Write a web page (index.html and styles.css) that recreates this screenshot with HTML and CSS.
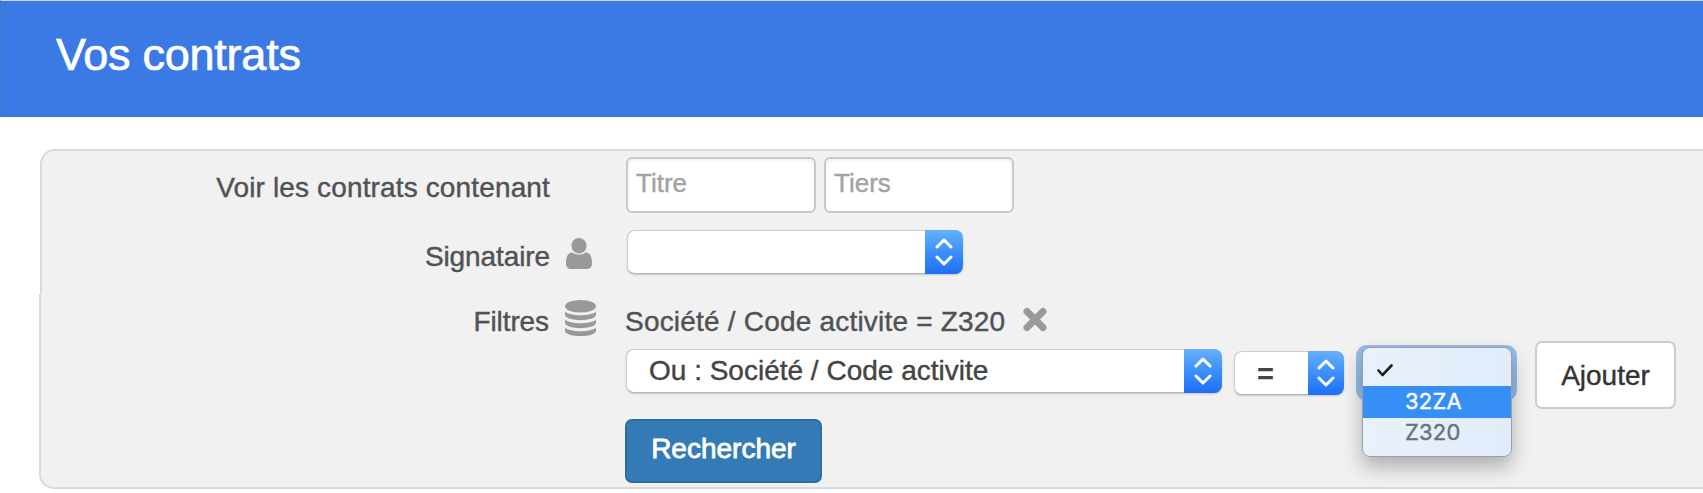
FILE: index.html
```html
<!DOCTYPE html>
<html lang="fr">
<head>
<meta charset="utf-8">
<title>Vos contrats</title>
<link rel="stylesheet" href="styles.css">
</head>
<body>
<header class="header"><h1 class="title">Vos contrats</h1></header>
<main class="main">
  <section class="panel panel-top">
    <div class="row row-search">
      <label class="label l-search">Voir les contrats contenant</label>
      <span class="icon"></span>
      <div class="inputs">
        <input class="input" type="text" placeholder="Titre">
        <input class="input" type="text" placeholder="Tiers">
      </div>
    </div>
    <div class="row row-sign">
      <label class="label l-sign">Signataire</label>
      <span class="icon icon-user"><svg width="26" height="31" viewBox="0 0 26 31" fill="#999"><ellipse cx="13" cy="7.7" rx="7.6" ry="7.7"/><path d="M6 14.2C9 17.3 17 17.3 20 14.2C24.500 14.800 26 19.500 26 25.500C26 29 24 31 21 31H5C2 31 0 29 0 25.500C0 19.500 1.500 14.800 6 14.200Z"/></svg></span>
      <div class="select s-sign"><span class="select-text"></span><span class="stepper"><svg width="18" height="28" viewBox="0 0 18 28"><path d="M2 9L9 2L16 9M2 19L9 26L16 19"/></svg></span></div>
    </div>
  </section>
  <section class="panel panel-bottom">
    <div class="row row-filter">
      <label class="label l-filter">Filtres</label>
      <span class="icon icon-db"><svg width="31" height="36" viewBox="0 0 31 36" fill="#999"><ellipse cx="15.5" cy="6.300" rx="15.500" ry="6.300"/><path id="band" d="M0 11.500C5 16.500 26 16.500 31 11.500V14.500C31 22 0 22 0 14.500Z"/><use href="#band" y="8"/><use href="#band" y="16"/></svg></span>
      <span class="filter-value">Société / Code activite = Z320</span>
      <svg class="remove" width="26" height="25" viewBox="0 0 26 25"><path d="M5 4.500L21 20.500M21 4.500L5 20.500"/></svg>
    </div>
    <div class="controls">
      <div class="select s-field"><span class="select-text t-field">Ou : Société / Code activite</span><span class="stepper"><svg width="18" height="28" viewBox="0 0 18 28"><path d="M2 9L9 2L16 9M2 19L9 26L16 19"/></svg></span></div>
      <div class="select s-op"><span class="select-text t-op">=</span><span class="stepper stepper-op"><svg width="18" height="28" viewBox="0 0 18 28"><path d="M2 9L9 2L16 9M2 19L9 26L16 19"/></svg></span></div>
      <div class="focus">
        <div class="menu">
          <div class="item item-empty"><svg width="16" height="13" viewBox="0 0 16 13"><path d="M1.500 6.500L5.500 11L14.500 1.500"/></svg></div>
          <div class="item item-active"><span>32ZA</span></div>
          <div class="item item-last">Z320</div>
        </div>
      </div>
      <button class="btn btn-add">Ajouter</button>
    </div>
    <button class="btn btn-search">Rechercher</button>
  </section>
</main>
</body>
</html>
```
FILE: styles.css
```css
* { box-sizing: border-box; }
body {
  margin: 0;
  height: 493px;
  overflow: hidden;
  background: #fff;
  font-family: "Liberation Sans", Arial, sans-serif;
  font-size: 28px;
  line-height: 32px;
  color: #505156;
  -webkit-text-stroke: 0.4px currentColor;
}
.header {
  height: 117px;
  border-top: 1px solid #c4daf8;
  border-bottom: 1px solid #4676c4;
  border-left: 1px solid #4676c4;
  background: #3b7ae5;
  padding: 28px 0 0 55px;
}
.title {
  margin: 0;
  font-size: 45px;
  line-height: 52px;
  font-weight: 400;
  letter-spacing: -0.25px;
  color: #fff;
  -webkit-text-stroke: 0.7px #fff;
}
.main { padding-top: 32px; }
.panel { background: #f1f1f1; border: 2px solid #dadada; border-right: 0; white-space: nowrap; }
.panel-top { height: 145px; margin-left: 40px; border-bottom: 0; border-top-left-radius: 15px; padding-top: 6px; }
.panel-bottom { height: 195px; margin-left: 39px; border-top: 0; border-bottom-left-radius: 15px; padding-top: 6px; }
.row { display: flex; align-items: flex-start; }
.label { width: 508px; text-align: right; }
.icon { width: 76px; display: flex; }
.l-search { padding-top: 15px; letter-spacing: 0.14px; }
.l-sign { padding-top: 11px; letter-spacing: -0.1px; }
.l-filter { padding-top: 6px; letter-spacing: -0.1px; }
.inputs { display: flex; gap: 8px; }
.input {
  width: 190px;
  height: 56px;
  border: 2px solid #c9c9c9;
  border-radius: 6px;
  background: #fff;
  box-shadow: inset 0 2px 3px rgba(0, 0, 0, 0.06);
  padding: 0 8px 3px;
  font: 26px "Liberation Sans", Arial, sans-serif;
  letter-spacing: 0;
}
.input::placeholder { color: #a3a3a3; opacity: 1; }
.row-sign { margin-top: 17px; }
.icon-user { padding: 8px 0 0 16px; }
.icon-db { padding: 0 0 0 16px; }
.filter-value { padding-top: 6px; width: 397px; letter-spacing: 0.2px; }
.remove { margin-top: 7px; fill: none; stroke: #999; stroke-width: 7; stroke-linecap: round; }
.select {
  display: flex;
  height: 44px;
  border-radius: 8px;
  background: #fff;
  border: 1px solid #cfcfcf;
  border-bottom-color: #b5b5b5;
  border-right: 0;
  box-shadow: 0 1px 2px rgba(0, 0, 0, 0.18);
  color: #444;
}
.select-text { flex: 1; }
.stepper {
  width: 38px;
  margin: -1px 0;
  border-radius: 0 8px 8px 0;
  background: linear-gradient(#66b0fb, #3f93fb 45%, #1d6ff7);
  display: flex;
  align-items: center;
  justify-content: center;
}
.stepper svg { fill: none; stroke: #fff; stroke-width: 3; stroke-linecap: round; stroke-linejoin: round; }
.stepper-op { width: 36px; }
.s-sign { width: 336px; margin-left: 1px; }
.controls { display: flex; align-items: flex-start; padding-left: 585px; margin-top: 3px; height: 78px; }
.s-field { width: 596px; margin-top: 8px; }
.t-field { padding: 5px 0 0 22px; }
.s-op { width: 110px; margin: 10px 0 0 12px; }
.t-op { padding: 7px 0 0 22px; font-size: 29px; line-height: 31px; font-weight: 700; -webkit-text-stroke: 0; }
.focus {
  width: 161px;
  height: 56px;
  margin: 4px 0 0 12px;
  border-radius: 11px;
  background: #94bde9;
  position: relative;
}
.menu {
  position: absolute;
  left: 6px;
  top: 2px;
  width: 150px;
  height: 110px;
  border: 1px solid #9a9fa8;
  border-radius: 8px;
  background: linear-gradient(90deg, #e9f1fb, #e1ecfb);
  box-shadow: 0 10px 20px rgba(0, 0, 0, 0.28);
  font-family: Inter, sans-serif;
  font-size: 22px;
  line-height: 30px;
  color: #6b717a;
}
.item { height: 32px; padding-left: 42px; letter-spacing: 0.2px; }
.item-empty { height: 38px; padding: 16px 0 0 14px; line-height: 0; }
.item-empty svg { fill: none; stroke: #222; stroke-width: 2.6; stroke-linecap: round; stroke-linejoin: round; }
.item-active { background: #368ff7; color: #fff; }
.item-last { line-height: 28px; }
.btn { font: 28px/32px "Liberation Sans", Arial, sans-serif; border-radius: 7px; padding: 0; }
.btn-add { width: 141px; height: 68px; margin-left: 18px; padding-top: 2px; border: 2px solid #ccc; background: #fff; color: #333; }
.btn-search {
  display: block;
  width: 197px;
  height: 64px;
  margin-left: 584px;
  border: 2px solid #2e6da4;
  background: #337ab7;
  color: #fff;
  padding-bottom: 5px;
  -webkit-text-stroke: 0.8px #fff;
}
```
